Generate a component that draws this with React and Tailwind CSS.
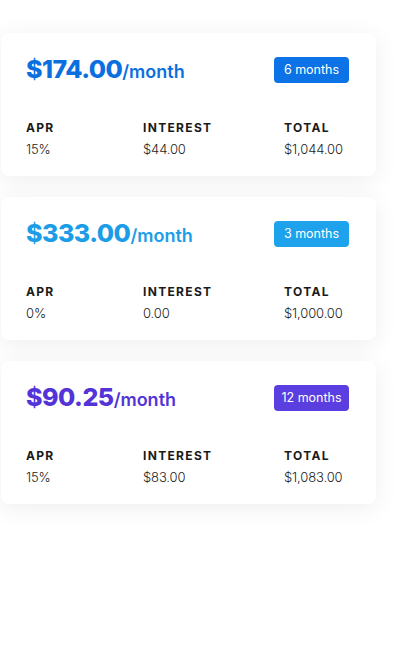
import React from "react";

const plans = [
  { price: "$174.00", months: "6 months", apr: "15%", interest: "$44.00", total: "$1,044.00", text: "text-[#0b6fe0]", badge: "bg-[#0b73e6]" },
  { price: "$333.00", months: "3 months", apr: "0%", interest: "0.00", total: "$1,000.00", text: "text-[#1c9de7]", badge: "bg-[#1ea2ec]" },
  { price: "$90.25", months: "12 months", apr: "15%", interest: "$83.00", total: "$1,083.00", text: "text-[#5234d8]", badge: "bg-[#5a3ee0]" },
];

function Card({ p }) {
  return (
    <div className="w-[375px] h-[143px] bg-white rounded-[8px] shadow-[0_4px_24px_rgba(0,0,0,0.07)] pl-[25px] pr-[27px] pt-[24px]">
      <div className="flex items-center justify-between h-[26px]">
        <div className={`flex items-baseline ${p.text}`}>
          <span className="text-[25px] font-extrabold tracking-[-0.02em]">{p.price}</span>
          <span className="text-[18px] font-semibold">/month</span>
        </div>
        <div className={`${p.badge} w-[75px] h-[26px] rounded-[4px] flex items-center justify-center text-white text-[12.5px] font-normal`}>
          {p.months}
        </div>
      </div>
      <div className="grid grid-cols-[117px_141px_1fr] mt-[37px]">
        {[["APR", p.apr], ["INTEREST", p.interest], ["TOTAL", p.total]].map(([l, v]) => (
          <div key={l} className="flex flex-col">
            <span className="text-[12px] leading-[16px] font-bold tracking-[0.11em] text-[#1a1a1a]">{l}</span>
            <span className="text-[13px] leading-[20px] font-light text-[#222] mt-[3px] tracking-[-0.01em]">{v}</span>
          </div>
        ))}
      </div>
    </div>
  );
}

export default function App() {
  return (
    <div className="w-[400px] h-[651px] bg-white pt-[33px] pl-[1px] flex flex-col gap-[21px]" style={{ fontFamily: "Inter, 'Noto Sans', sans-serif" }}>
      {plans.map((p) => (
        <Card key={p.months} p={p} />
      ))}
    </div>
  );
}
